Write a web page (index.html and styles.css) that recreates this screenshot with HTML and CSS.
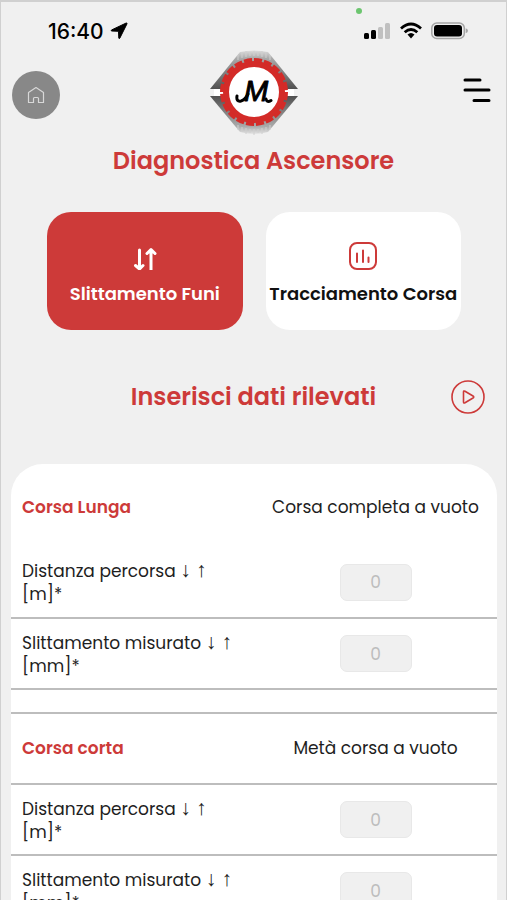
FILE: index.html
```
<!DOCTYPE html>
<html lang="it">

<head>
    <meta charset="UTF-8">
    <meta name="viewport" content="width=device-width, initial-scale=1.0">
    <title>Diagnostica Ascensore</title>
    <link rel="stylesheet" href="styles.css">
</head>

<body>
    <div class="status">
        <div class="status__left">
            <span class="status__time">16:40</span>
            <svg width="18" height="18" viewBox="0 0 18 18"><path d="M16.200 1 L1.500 8 Q.6 8.700 1.800 9 L8.500 9.300 L8.800 16 Q9.200 17.300 9.900 16 L17 1.800 Q17.200 .8 16.200 1Z" stroke="#000" stroke-width="1"/></svg>
        </div>
        <div class="status__right">
            <span class="status__dot"></span>
            <svg width="27" height="18" viewBox="0 0 27 18">
                <rect x="0" y="11" width="5" height="6" rx="1.500"/>
                <rect x="7" y="8" width="5" height="9" rx="1.500"/>
                <rect x="14" y="5" width="5" height="12" rx="1.500" fill="#c0c0c0"/>
                <rect x="21" y="1" width="5" height="16" rx="1.500" fill="#c0c0c0"/>
            </svg>
            <svg width="22" height="18" viewBox="0 0 22 18" fill="none" stroke="#000" stroke-width="2.800">
                <path d="M1 6.500 Q11 -2.500 21 6.500"/>
                <path d="M4.700 10.300 Q11 4.600 17.300 10.300"/>
                <path d="M7.500 12.500 Q11 9.500 14.500 12.500 L11 16.500Z" fill="#000" stroke="none"/>
            </svg>
            <svg width="37" height="18" viewBox="0 0 37 18">
                <rect x=".8" y="1" width="32.500" height="15.500" rx="5" fill="none" stroke="#a5a5a5" stroke-width="1.500"/>
                <rect x="3" y="3" width="28" height="11.500" rx="3"/>
                <path d="M34.700 6.300 Q37 7 37 8.700 Q37 10.500 34.700 11.300Z" fill="#a5a5a5"/>
            </svg>
        </div>
    </div>

    <header class="header">
        <a class="home" href="#" aria-label="Home">
            <svg width="18" height="18" viewBox="0 0 18 18" fill="none" stroke="#d8d8d8" stroke-width="1.200" stroke-linejoin="round"><path d="M1.500 16.500 V6.500 L9 1.500 L16.500 6.500 V16.500 H11.500 V12.500 Q11.500 11.500 10.500 11.500 H7.500 Q6.500 11.500 6.500 12.500 V16.500Z"/></svg>
        </a>
        <svg class="logo" width="90" height="86" viewBox="0 0 90 86">
            <defs>
                <linearGradient id="up" x1="0" y1="1" x2="0" y2="0">
                    <stop offset="0" stop-color="#505050"/>
                    <stop offset=".45" stop-color="#858585"/>
                    <stop offset=".8" stop-color="#aaa"/>
                    <stop offset="1" stop-color="#ddd"/>
                </linearGradient>
                <linearGradient id="down" x1="0" y1="0" x2="0" y2="1">
                    <stop offset="0" stop-color="#505050"/>
                    <stop offset=".45" stop-color="#858585"/>
                    <stop offset=".8" stop-color="#aaa"/>
                    <stop offset="1" stop-color="#e4e4e4"/>
                </linearGradient>
            </defs>
            <path d="M5 39 H85 V46 H5Z" fill="#fff"/>
            <path d="M1 39 L31 2 Q45 -1 59 2 L89 39Z" fill="url(#up)"/>
            <path d="M1 46 L31 82 Q45 86 59 82 L89 46Z" fill="url(#down)"/>
            <path d="M29 5V10M33 3V8M37 1V7M41 2V6M45 1V6M49 2V6M53 1V7M57 3V8M61 5V10M29 75V80M33 77V82M37 78V84M41 79V83M45 79V85M49 79V83M53 78V84M57 77V82M61 75V80" stroke="#d0d0d0" stroke-width="1"/>
            <circle cx="45" cy="42" r="28" fill="#fff" stroke="#d32b28" stroke-width="6"/>
            <circle cx="45" cy="42" r="32" pathLength="200" fill="none" stroke="#d32b28" stroke-width="4" stroke-dasharray="8 2"/>
            <text class="logo__letter" x="47" y="51" text-anchor="middle">M</text>
            <path d="M28 46 Q27 52 32 51 Q36 50 39 44 M57 49 Q58 53 62 50.500" fill="none" stroke="#000" stroke-width="3" stroke-linecap="round"/>
        </svg>
        <button class="menu" type="button" aria-label="Menu">
            <svg width="28" height="26" viewBox="0 0 28 26" stroke="#000" stroke-width="3" stroke-linecap="round"><path d="M2 3 H17 M2 13 H26 M11 23.500 H26"/></svg>
        </button>
    </header>

    <h1 class="title">Diagnostica Ascensore</h1>

    <nav class="tabs">
        <button class="tab tab--active" type="button">
            <svg width="28" height="28" viewBox="0 0 28 28" fill="none" stroke="#fff" stroke-width="3" stroke-linecap="round" stroke-linejoin="round"><path d="M8.500 8 V27 M4.500 23.500 L8.500 27 L12 23.500 M20 28 V8 M16 11.500 L20 7.500 L24 11.500"/></svg>
            <span>Slittamento Funi</span>
        </button>
        <button class="tab" type="button">
            <svg width="28" height="28" viewBox="0 0 28 28" fill="none" stroke="#cd3a39" stroke-width="2" stroke-linecap="round"><rect x="1" y="1" width="26" height="26" rx="7"/><path d="M8 11.500 V20 M14 8.500 V20 M19.500 15.500 V20"/></svg>
            <span>Tracciamento Corsa</span>
        </button>
    </nav>

    <div class="section__header">
        <h2>Inserisci dati rilevati</h2>
        <button class="play" type="button" aria-label="Video">
            <svg width="34" height="34" viewBox="0 0 34 34" fill="none" stroke="#cd3a39" stroke-width="1.600" stroke-linejoin="round"><circle cx="17" cy="17" r="16"/><path d="M12.500 12 Q12.500 10.500 14 11.300 L22 16 Q23.500 17 22 18 L14 22.700 Q12.500 23.500 12.500 22Z"/></svg>
        </button>
    </div>

    <form class="panel">
        <table class="data">
            <tbody>
                <tr class="data__first">
                    <th scope="col">Corsa Lunga</th>
                    <td>Corsa completa a vuoto</td>
                </tr>
                <tr>
                    <td><label for="distanzaLunga">Distanza percorsa <span class="arrows">↓ ↑</span><br>[m]*</label></td>
                    <td><input type="text" id="distanzaLunga" name="distanzaLunga" placeholder="0" inputmode="decimal"></td>
                </tr>
                <tr>
                    <td><label for="slittamentoLunga">Slittamento misurato <span class="arrows">↓ ↑</span><br>[mm]*</label></td>
                    <td><input type="text" id="slittamentoLunga" name="slittamentoLunga" placeholder="0" inputmode="decimal"></td>
                </tr>
                <tr class="data__space">
                    <td colspan="2"></td>
                </tr>
                <tr>
                    <th scope="col">Corsa corta</th>
                    <td>Metà corsa a vuoto</td>
                </tr>
                <tr>
                    <td><label for="distanzaCorta">Distanza percorsa <span class="arrows">↓ ↑</span><br>[m]*</label></td>
                    <td><input type="text" id="distanzaCorta" name="distanzaCorta" placeholder="0" inputmode="decimal"></td>
                </tr>
                <tr>
                    <td><label for="slittamentoCorta">Slittamento misurato <span class="arrows">↓ ↑</span><br>[mm]*</label></td>
                    <td><input type="text" id="slittamentoCorta" name="slittamentoCorta" placeholder="0" inputmode="decimal"></td>
                </tr>
            </tbody>
        </table>
    </form>
</body>

</html>
```
FILE: styles.css
```
* {
    box-sizing: border-box;
}

body {
    margin: 0;
    background-color: #f0f0f0;
    border: 1px solid #d0d0d0;
    border-top-width: 2px;
    color: #1e1e1e;
    font-family: Poppins, Inter, "Open Sans", sans-serif;
    font-size: 17px;
}

button {
    padding: 0;
    border: none;
    background: none;
    font: inherit;
    cursor: pointer;
}

svg {
    display: block;
}

/* barra di stato */
.status {
    display: flex;
    justify-content: space-between;
    align-items: center;
    height: 48px;
    padding: 10px 38px 0 47px;
}

.status__left,
.status__right {
    display: flex;
    align-items: center;
    gap: 6px;
}

.status__right {
    position: relative;
    gap: 9px;
}

.status__time {
    color: #000;
    font-family: Inter, sans-serif;
    font-size: 21px;
    font-weight: 500;
}

.status__dot {
    position: absolute;
    top: -14px;
    left: -8px;
    width: 6px;
    height: 6px;
    border-radius: 50%;
    background-color: #6cc56f;
}

/* intestazione */
.header {
    display: grid;
    grid-template-columns: 1fr auto 1fr;
    align-items: center;
    padding: 0 11px;
}

.home {
    display: flex;
    justify-content: center;
    align-items: center;
    width: 48px;
    height: 48px;
    margin-top: 4px;
    border-radius: 50%;
    background-color: #888;
}

.logo__letter {
    font-family: "Liberation Sans", sans-serif;
    font-size: 29px;
    font-style: italic;
    stroke: #000;
    stroke-width: 1;
    stroke-linejoin: round;
}

.menu {
    justify-self: end;
    margin: 0 4px 6px 0;
}

.title,
.section__header h2 {
    margin: 0;
    color: #cd3a39;
    font-size: 24px;
    font-weight: 600;
    line-height: 36px;
    text-align: center;
}

.title {
    margin-top: 7px;
}

/* schede */
.tabs {
    display: grid;
    grid-template-columns: 1fr 1fr;
    gap: 23px;
    margin-top: 33px;
    padding: 0 45px 0 46px;
}

.tab {
    display: flex;
    flex-direction: column;
    align-items: center;
    justify-content: center;
    gap: 10px;
    height: 118px;
    padding-top: 6px;
    border-radius: 24px;
    background-color: #fff;
    color: #111;
    font-size: 18px;
    font-weight: 600;
    line-height: 27px;
    white-space: nowrap;
}

.tab--active {
    background-color: #cd3a39;
    color: #fff;
}

.section__header {
    display: grid;
    grid-template-columns: 34px 1fr 34px;
    align-items: center;
    margin-top: 49px;
    padding: 0 21px;
}

.section__header h2 {
    grid-column: 2;
}

/* tabella dei dati */
.panel {
    margin: 49px 9px 0 10px;
    border-radius: 32px 32px 0 0;
    background-color: #fff;
}

.data {
    width: 100%;
    table-layout: fixed;
    border-collapse: collapse;
}

.data tr {
    height: 71px;
    border-bottom: 2px solid #bdbdbd;
}

.data .data__first {
    height: 83px;
    border-bottom: none;
}

.data .data__space {
    height: 24px;
}

.data td,
.data th {
    padding: 0;
    line-height: 23px;
    text-align: center;
}

.data .data__first > * {
    padding-top: 4px;
}

.data th:first-child,
.data td:first-child {
    padding-left: 11px;
    text-align: left;
}

.data th {
    color: #cd3a39;
    font-weight: 600;
}

.data label {
    display: block;
    padding-top: 2px;
    white-space: nowrap;
}

.arrows {
    font-family: "Liberation Serif", serif;
    font-size: 21px;
    line-height: 1;
}

.data input {
    display: block;
    width: 72px;
    height: 37px;
    margin: 0 auto;
    padding: 0;
    border: 1px solid #e8e8e8;
    border-radius: 7px;
    background-color: #f0f0f0;
    font: inherit;
    text-align: center;
}

.data input::placeholder {
    color: #bdbdbd;
}
```
